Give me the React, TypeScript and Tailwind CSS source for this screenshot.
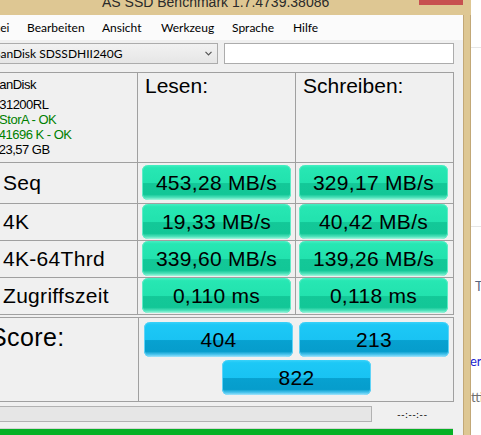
import type { ReactNode } from "react";

const results = [
  { label: "Seq", read: "453,28 MB/s", write: "329,17 MB/s" },
  { label: "4K", read: "19,33 MB/s", write: "40,42 MB/s" },
  { label: "4K-64Thrd", read: "339,60 MB/s", write: "139,26 MB/s" },
  { label: "Zugriffszeit", read: "0,110 ms", write: "0,118 ms" },
];

const menu = [
  { label: "Datei", width: "w-[46px] -ml-[19px]" },
  { label: "Bearbeiten", width: "w-[75px]" },
  { label: "Ansicht", width: "w-[59px]" },
  { label: "Werkzeug", width: "w-[71px]" },
  { label: "Sprache", width: "w-[61px]" },
  { label: "Hilfe", width: "w-[40px]" },
];

function GreenButton({ children }: { children: ReactNode }) {
  return (
    <div className="flex h-[35px] w-[149px] items-center justify-center rounded-[6px] bg-[linear-gradient(to_bottom,#46efc2_0%,#27e7b3_8%,#22e2ae_50%,#13c898_53%,#12c797_84%,#4fe2bb_93%,#a9f7df_100%)] text-[21px] leading-none tracking-[0.3px] shadow-[inset_1px_0_0_#5eecc6,inset_-1px_0_0_#5eecc6]">
      {children}
    </div>
  );
}

function BlueButton({ children, className = "" }: { children: ReactNode; className?: string }) {
  return (
    <div
      className={`flex h-[35px] items-center justify-center rounded-[6px] bg-[linear-gradient(to_bottom,#3ad2f9_0%,#1dc8f6_8%,#19c3f3_50%,#07a1d0_53%,#069dcc_84%,#4cc5ee_93%,#a3e5fc_100%)] text-[21px] leading-none tracking-[0.3px] shadow-[inset_1px_0_0_#5fd3f7,inset_-1px_0_0_#5fd3f7] ${className}`}
    >
      {children}
    </div>
  );
}

function TitleBar() {
  return (
    <div className="flex h-[15px] shrink-0 overflow-hidden bg-[#dec793]">
      <div className="w-[419px] pl-[102px]">
        <div className="-mt-[5px] whitespace-nowrap text-[14px] leading-[15px] text-[#2a2a2a]">
          AS SSD Benchmark 1.7.4739.38086
        </div>
      </div>
      <div className="h-[5px] w-[44px] bg-[#c75050]" />
    </div>
  );
}

function MenuBar() {
  return (
    <div className="flex h-[25px] shrink-0 items-center bg-[#fbfbfb] font-['Lato','Noto_Sans',sans-serif] text-[12px] text-black">
      {menu.map((m) => (
        <span key={m.label} className={`shrink-0 whitespace-nowrap ${m.width}`}>
          {m.label}
        </span>
      ))}
    </div>
  );
}

function DriveBar() {
  return (
    <div className="mt-[3px] flex h-[21px] shrink-0 font-['Lato','Noto_Sans',sans-serif] text-[12px]">
      <div className="flex w-[218px] items-center justify-between border border-l-0 border-[#acacac] bg-[linear-gradient(to_bottom,#f2f2f2,#e6e6e6)] pr-[5px]">
        <span className="-ml-[6px] whitespace-nowrap">SanDisk SDSSDHII240G</span>
        <svg width="7" height="5" viewBox="0 0 7 5" className="text-[#555]">
          <path d="M0.5 0.8 L3.5 3.8 L6.5 0.8" fill="none" stroke="currentColor" strokeWidth="1.2" />
        </svg>
      </div>
      <div className="ml-[6px] w-[230px] border border-[#acacac] bg-white" />
    </div>
  );
}

function ResultsTable() {
  return (
    <div className="mt-[8px] grid w-[454px] shrink-0 grid-cols-[137px_157px_157px] grid-rows-[89px_40px_36px_36px_36px] gap-px bg-[#a0a0a0] pt-px pr-px pb-px">
      <div className="bg-[#f0f0f0] pt-[4px] text-[13px] leading-[15px] tracking-[-0.5px]">
        <div className="-ml-[9px] whitespace-nowrap">SanDisk</div>
        <div className="-ml-[9px] mt-[5px] whitespace-nowrap">X31200RL</div>
        <div className="-ml-[10px] whitespace-nowrap text-[#008000]">iaStorA - OK</div>
        <div className="-ml-[8px] whitespace-nowrap text-[#008000]">141696 K - OK</div>
        <div className="-ml-[8px] whitespace-nowrap">223,57 GB</div>
      </div>
      <div className="bg-[#f0f0f0] pl-[7px] pt-px text-[21px] leading-[24px]">Lesen:</div>
      <div className="bg-[#f0f0f0] pl-[7px] pt-px text-[21px] leading-[24px]">Schreiben:</div>

      {results.map((r, i) => (
        <Row key={r.label} label={r.label} read={r.read} write={r.write} first={i === 0} />
      ))}
    </div>
  );
}

function Row({ label, read, write, first }: { label: string; read: string; write: string; first: boolean }) {
  const pad = first ? "pt-[2px]" : "";
  return (
    <>
      <div className="flex items-center bg-[#f0f0f0] pl-[3px] text-[21px] tracking-[0.3px]">{label}</div>
      <div className={`bg-[#f0f0f0] pl-[4px] ${pad}`}>
        <GreenButton>{read}</GreenButton>
      </div>
      <div className={`bg-[#f0f0f0] pl-[3px] ${pad}`}>
        <GreenButton>{write}</GreenButton>
      </div>
    </>
  );
}

function ScoreTable() {
  return (
    <div className="mt-[2px] grid w-[454px] shrink-0 grid-cols-[138px_314px] grid-rows-[83px] gap-px bg-[#a0a0a0] pt-px pr-px pb-px">
      <div className="bg-[#f0f0f0] pt-[5px] text-[25px] leading-[28px] tracking-[0.4px]">
        <div className="-ml-[10px]">Score:</div>
      </div>
      <div className="flex flex-col bg-[#f0f0f0] pl-[5px] pt-[4px]">
        <div className="flex gap-[6px]">
          <BlueButton className="w-[149px]">404</BlueButton>
          <BlueButton className="w-[150px]">213</BlueButton>
        </div>
        <BlueButton className="ml-[78px] mt-[3px] w-[149px]">822</BlueButton>
      </div>
    </div>
  );
}

function Footer() {
  return (
    <>
      <div className="mt-[4px] flex h-[16px] shrink-0 items-center">
        <div className="h-full w-[372px] border border-l-0 border-[#b2b2b2] bg-[#e6e6e6]" />
        <span className="ml-[25px] font-['Lato','Noto_Sans',sans-serif] text-[10px] leading-none tracking-[0.4px]">--:--:--</span>
      </div>
      <div className="mt-[6px] h-[7px] w-[453px] shrink-0 border-t border-[#d4d4d4] bg-[#06b025]" />
    </>
  );
}

function Behind() {
  return (
    <div className="flex w-[10px] shrink-0 flex-col overflow-hidden bg-white font-['Lato','Noto_Sans',sans-serif] text-[13px] leading-[14px]">
      <div className="mt-[47px] h-px bg-[#e6e6e6]" />
      <div className="mt-[178px] h-px bg-[#e6e6e6]" />
      <div className="mt-[52px] pl-[4px] text-[#56657f]">T</div>
      <div className="-ml-[1px] mt-[61px] whitespace-nowrap text-[#2323d0]">er</div>
      <div className="mt-[22px] whitespace-nowrap text-[#707070]">ttie</div>
    </div>
  );
}

export default function App() {
  return (
    <div className="flex h-[435px] w-[481px] overflow-hidden bg-white font-['Liberation_Sans',Arial,sans-serif] text-black">
      <div className="flex w-[471px] shrink-0 flex-col">
        <TitleBar />
        <div className="flex flex-1">
          <div className="flex w-[463px] shrink-0 flex-col bg-[#f0f0f0]">
            <MenuBar />
            <DriveBar />
            <ResultsTable />
            <ScoreTable />
            <Footer />
          </div>
          <div className="w-[8px] border-x border-[#c2a877] bg-[#dec793]" />
        </div>
      </div>
      <Behind />
    </div>
  );
}
